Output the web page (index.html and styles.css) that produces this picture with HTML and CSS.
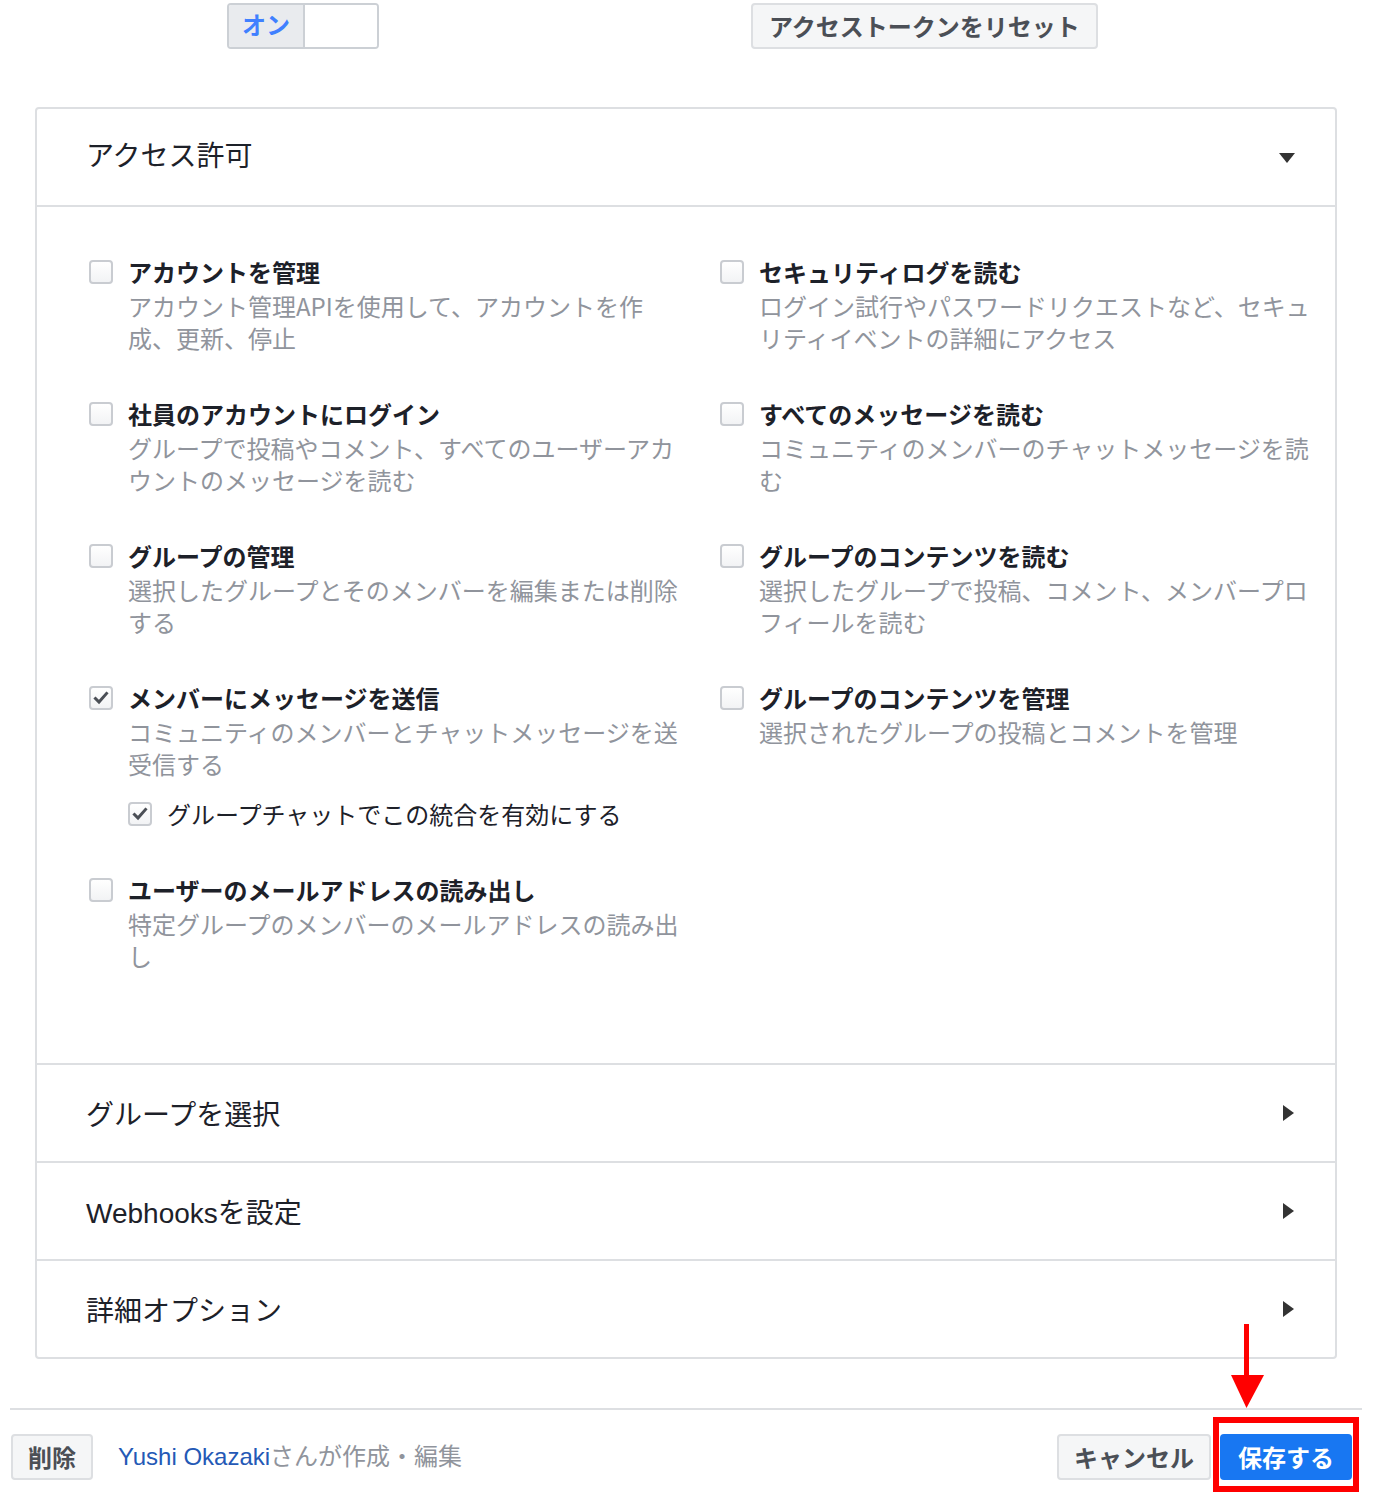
FILE: index.html
```html
<!DOCTYPE html>
<html lang="ja">
<head>
  <meta charset="UTF-8" />
  <title>アクセス許可</title>
  <link rel="stylesheet" href="styles.css">
</head>
<body>
  <div class="top-row">
    <div class="toggle">
      <span class="toggle-on">オン</span>
      <span class="toggle-off"></span>
    </div>
    <button class="btn btn-reset">アクセストークンをリセット</button>
  </div>

  <div class="panel">
    <div class="section-head open">
      <span>アクセス許可</span>
      <span class="caret-down"></span>
    </div>

    <div class="perm-grid">
      <div class="perm">
        <span class="box"></span>
        <div class="perm-text">
          <div class="perm-title">アカウントを管理</div>
          <div class="perm-desc">アカウント管理APIを使用して、アカウントを作成、更新、停止</div>
        </div>
      </div>
      <div class="perm">
        <span class="box"></span>
        <div class="perm-text">
          <div class="perm-title">セキュリティログを読む</div>
          <div class="perm-desc">ログイン試行やパスワードリクエストなど、セキュリティイベントの詳細にアクセス</div>
        </div>
      </div>

      <div class="perm">
        <span class="box"></span>
        <div class="perm-text">
          <div class="perm-title">社員のアカウントにログイン</div>
          <div class="perm-desc">グループで投稿やコメント、すべてのユーザーアカウントのメッセージを読む</div>
        </div>
      </div>
      <div class="perm">
        <span class="box"></span>
        <div class="perm-text">
          <div class="perm-title">すべてのメッセージを読む</div>
          <div class="perm-desc">コミュニティのメンバーのチャットメッセージを読む</div>
        </div>
      </div>

      <div class="perm">
        <span class="box"></span>
        <div class="perm-text">
          <div class="perm-title">グループの管理</div>
          <div class="perm-desc">選択したグループとそのメンバーを編集または削除する</div>
        </div>
      </div>
      <div class="perm">
        <span class="box"></span>
        <div class="perm-text">
          <div class="perm-title">グループのコンテンツを読む</div>
          <div class="perm-desc">選択したグループで投稿、コメント、メンバープロフィールを読む</div>
        </div>
      </div>

      <div class="perm">
        <span class="box checked">
          <svg viewBox="0 0 20 20" width="20" height="20"><polyline points="4.5,10.5 8,14 15.5,5.5" /></svg>
        </span>
        <div class="perm-text">
          <div class="perm-title">メンバーにメッセージを送信</div>
          <div class="perm-desc">コミュニティのメンバーとチャットメッセージを送受信する</div>
          <div class="sub-perm">
            <span class="box checked">
              <svg viewBox="0 0 20 20" width="20" height="20"><polyline points="4.5,10.5 8,14 15.5,5.5" /></svg>
            </span>
            <span>グループチャットでこの統合を有効にする</span>
          </div>
        </div>
      </div>
      <div class="perm">
        <span class="box"></span>
        <div class="perm-text">
          <div class="perm-title">グループのコンテンツを管理</div>
          <div class="perm-desc">選択されたグループの投稿とコメントを管理</div>
        </div>
      </div>

      <div class="perm">
        <span class="box"></span>
        <div class="perm-text">
          <div class="perm-title">ユーザーのメールアドレスの読み出し</div>
          <div class="perm-desc">特定グループのメンバーのメールアドレスの読み出し</div>
        </div>
      </div>
    </div>

    <div class="section-head closed">
      <span>グループを選択</span>
      <span class="caret-right"></span>
    </div>
    <div class="section-head closed">
      <span>Webhooksを設定</span>
      <span class="caret-right"></span>
    </div>
    <div class="section-head closed">
      <span>詳細オプション</span>
      <span class="caret-right"></span>
    </div>
  </div>

  <div class="footer">
    <div class="footer-left">
      <button class="btn">削除</button>
      <span class="author"><a href="#">Yushi Okazaki</a>さんが作成・編集</span>
    </div>
    <div class="footer-right">
      <button class="btn">キャンセル</button>
      <div class="save-wrap">
        <button class="btn btn-primary">保存する</button>
        <!-- annotation -->
        <span class="highlight"></span>
        <svg class="arrow" viewBox="0 0 36 88" width="36" height="88">
          <line x1="17.5" y1="2" x2="17.5" y2="56" />
          <polygon points="2,53 35,53 17.5,86" />
        </svg>
      </div>
    </div>
  </div>
</body>
</html>
```

FILE: styles.css
```css
body {
  margin: 0;
  background-color: #fff;
  font-family: "Liberation Sans", "Noto Sans CJK JP", sans-serif;
  color: #1d2129;
}
.top-row {
  display: flex;
  align-items: flex-start;
  padding: 3px 0 0 227px;
  gap: 372px;
}
.toggle {
  display: flex;
  width: 152px;
  height: 46px;
  box-sizing: border-box;
  border: 2px solid #ccd0d5;
  border-radius: 4px;
  overflow: hidden;
}
.toggle-on {
  width: 74px;
  background-color: #e9ebee;
  border-right: 2px solid #ccd0d5;
  color: #4080ff;
  font-size: 24px;
  font-weight: bold;
  line-height: 42px;
  text-align: center;
}
.toggle-off {
  flex: 1;
  background-color: #fff;
}
.btn {
  height: 46px;
  box-sizing: border-box;
  padding: 0 15px;
  border: 2px solid #dddfe2;
  border-radius: 4px;
  background-color: #f5f6f7;
  color: #4b4f56;
  font-family: "Noto Sans CJK JP", sans-serif;
  font-size: 24px;
  font-weight: bold;
  line-height: 42px;
  cursor: pointer;
}
.btn-reset {
  padding: 0 16px;
}
.btn-primary {
  background-color: #1877f2;
  border-color: #1877f2;
  color: #fff;
  padding: 0 16px;
}
.panel {
  margin: 58px 39px 0 35px;
  border: 2px solid #dddfe2;
  border-radius: 4px;
}
.section-head {
  display: flex;
  align-items: center;
  justify-content: space-between;
  box-sizing: border-box;
  height: 96px;
  padding: 0 41px 0 49px;
  border-bottom: 2px solid #dddfe2;
  font-size: 28px;
}
.section-head.open {
  height: 98px;
  padding-bottom: 6px;
}
.section-head.closed {
  height: 98px;
  border-bottom: none;
  border-top: 2px solid #dddfe2;
}
.caret-down {
  width: 0;
  height: 0;
  margin: 7px -1px 0 0;
  border-left: 8px solid transparent;
  border-right: 8px solid transparent;
  border-top: 10px solid #333;
}
.caret-right {
  width: 0;
  height: 0;
  border-top: 8px solid transparent;
  border-bottom: 8px solid transparent;
  border-left: 11px solid #333;
}
.perm-grid {
  display: grid;
  grid-template-columns: 1fr 1fr;
  column-gap: 36px;
  row-gap: 42px;
  padding: 47px 20px 91px 52px;
  font-family: "Noto Sans CJK JP", sans-serif;
}
.perm {
  display: flex;
  align-items: flex-start;
  gap: 15px;
}
.box {
  flex: none;
  display: flex;
  align-items: center;
  justify-content: center;
  width: 24px;
  height: 24px;
  margin-top: 6px;
  box-sizing: border-box;
  border: 2px solid #c9ccd1;
  border-radius: 4px;
  background: linear-gradient(#fff, #f2f3f5);
}
.box svg polyline {
  fill: none;
  stroke: #4b4f56;
  stroke-width: 3;
  stroke-linecap: square;
}
.perm-text {
  flex: 1;
  min-width: 0;
}
.perm-title {
  font-size: 24px;
  font-weight: bold;
  line-height: 36px;
  color: #1d2129;
}
.perm-desc {
  font-size: 24px;
  line-height: 32px;
  color: #90949c;
}
.sub-perm {
  display: flex;
  align-items: flex-start;
  gap: 15px;
  margin-top: 18px;
  font-size: 24px;
  line-height: 32px;
  color: #1d2129;
}
.sub-perm .box {
  margin-top: 4px;
}
.footer {
  display: flex;
  align-items: center;
  justify-content: space-between;
  margin: 49px 14px 0 10px;
  padding: 24px 10px 20px 1px;
  border-top: 2px solid #dddfe2;
}
.footer-left,
.footer-right {
  display: flex;
  align-items: center;
}
.footer-left {
  gap: 25px;
}
.footer-right {
  gap: 9px;
}
.author {
  margin-bottom: 6px;
  font-size: 24px;
  color: #90949c;
}
.author a {
  color: #2459b6;
  text-decoration: none;
}
.save-wrap {
  position: relative;
}
.highlight {
  position: absolute;
  left: -7px;
  right: -7px;
  top: -17px;
  bottom: -12px;
  border: 6px solid #f00;
  pointer-events: none;
}
.arrow {
  position: absolute;
  left: 9px;
  top: -112px;
}
.arrow line {
  stroke: #f00;
  stroke-width: 5;
}
.arrow polygon {
  fill: #f00;
}
```
